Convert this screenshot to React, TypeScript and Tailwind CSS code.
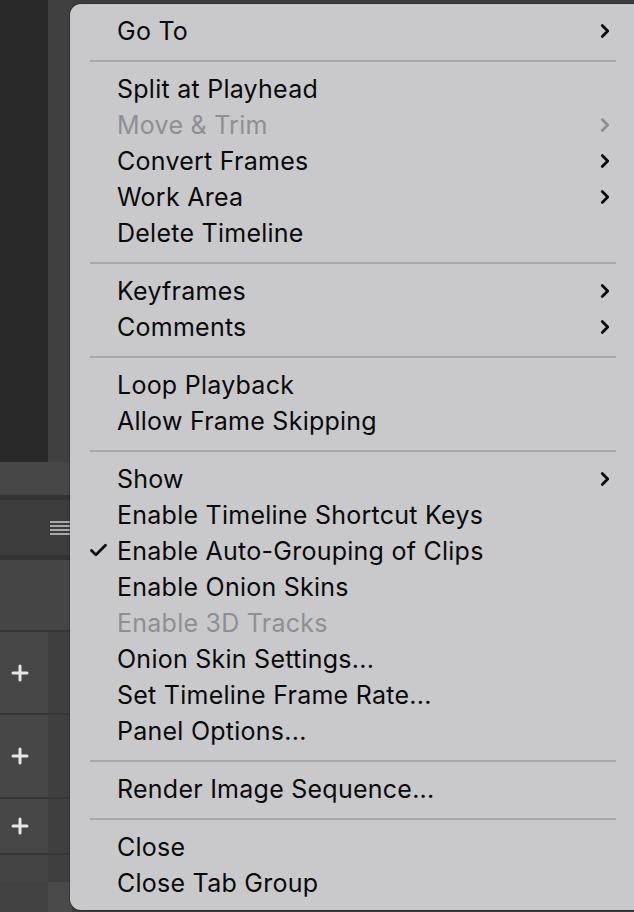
import { Check, ChevronRight, Plus } from "lucide-react";

type Item =
  | { kind: "item"; label: string; sub?: boolean; disabled?: boolean; checked?: boolean }
  | { kind: "sep" };

const ITEMS: Item[] = [
  { kind: "item", label: "Go To", sub: true },
  { kind: "sep" },
  { kind: "item", label: "Split at Playhead" },
  { kind: "item", label: "Move & Trim", sub: true, disabled: true },
  { kind: "item", label: "Convert Frames", sub: true },
  { kind: "item", label: "Work Area", sub: true },
  { kind: "item", label: "Delete Timeline" },
  { kind: "sep" },
  { kind: "item", label: "Keyframes", sub: true },
  { kind: "item", label: "Comments", sub: true },
  { kind: "sep" },
  { kind: "item", label: "Loop Playback" },
  { kind: "item", label: "Allow Frame Skipping" },
  { kind: "sep" },
  { kind: "item", label: "Show", sub: true },
  { kind: "item", label: "Enable Timeline Shortcut Keys" },
  { kind: "item", label: "Enable Auto-Grouping of Clips", checked: true },
  { kind: "item", label: "Enable Onion Skins" },
  { kind: "item", label: "Enable 3D Tracks", disabled: true },
  { kind: "item", label: "Onion Skin Settings..." },
  { kind: "item", label: "Set Timeline Frame Rate..." },
  { kind: "item", label: "Panel Options..." },
  { kind: "sep" },
  { kind: "item", label: "Render Image Sequence..." },
  { kind: "sep" },
  { kind: "item", label: "Close" },
  { kind: "item", label: "Close Tab Group" },
];

function AddRow({ h }: { h: string }) {
  return (
    <div className={`flex ${h}`}>
      <div className="w-[48px] bg-[#474747] flex items-center justify-center pr-[8px]">
        <Plus className="w-[24px] h-[24px] text-[#e6e6e6]" strokeWidth={3} />
      </div>
      <div className="flex-1 bg-[#3f3f3f]" />
    </div>
  );
}

export default function App() {
  return (
    <div
      className="relative w-[634px] h-[912px] overflow-hidden bg-[#3c3c3c]"
      style={{ fontFamily: "Inter, 'Noto Sans', sans-serif" }}
    >
      {/* panel behind the menu */}
      <div className="flex flex-col w-[72px] h-full">
        <div className="flex h-[462px]">
          <div className="w-[48px] bg-[#282828]" />
          <div className="flex-1 bg-[#404040]" />
        </div>
        <div className="h-[33px] bg-[#474747]" />
        <div className="h-[5px] bg-[#333333]" />
        <div className="h-[55px] bg-[#3c3c3c] flex items-center justify-end pr-[2px]">
          <div className="flex flex-col gap-[2px] w-[20px]">
            <div className="h-[2px] bg-[#a8a8a8]" />
            <div className="h-[2px] bg-[#a8a8a8]" />
            <div className="h-[2px] bg-[#a8a8a8]" />
            <div className="h-[2px] bg-[#a8a8a8]" />
          </div>
        </div>
        <div className="h-[5px] bg-[#333333]" />
        <div className="h-[70px] bg-[#454545]" />
        <div className="h-[2px] bg-[#363636]" />
        <AddRow h="h-[81px]" />
        <div className="h-[2px] bg-[#363636]" />
        <AddRow h="h-[82px]" />
        <div className="h-[2px] bg-[#363636]" />
        <AddRow h="h-[54px]" />
        <div className="h-[2px] bg-[#363636]" />
        <div className="flex h-[27px]">
          <div className="w-[48px] bg-[#444444]" />
          <div className="flex-1 bg-[#3f3f3f]" />
        </div>
        <div className="flex flex-1">
          <div className="w-[48px] bg-[#424242]" />
          <div className="flex-1 bg-[#4a4a4a]" />
        </div>
      </div>

      {/* context menu */}
      <div className="absolute left-[70px] top-[4px] w-[580px] h-[906px] rounded-[11px] bg-[#c9c9cc] py-[9px] shadow-[0_0_0_1px_rgba(0,0,0,0.25)]">
        {ITEMS.map((it, i) =>
          it.kind === "sep" ? (
            <div key={i} className="h-[22px] flex items-center pl-[20px] pr-[34px]">
              <div className="h-[2px] w-full bg-[#aaaaad] mt-[2px]" />
            </div>
          ) : (
            <div
              key={i}
              className={`relative h-[36px] flex items-center pl-[47px] text-[25px] tracking-[0.25px] ${
                it.disabled ? "text-[#8f8f92]" : "text-[#0a0a0a]"
              }`}
            >
              {it.checked && (
                <Check className="absolute left-[18px] top-[7px] w-[21px] h-[21px]" strokeWidth={3.2} />
              )}
              <span className="leading-none">{it.label}</span>
              {it.sub && (
                <ChevronRight
                  className={`absolute left-[524px] top-[7px] w-[22px] h-[22px] ${
                    it.disabled ? "text-[#8f8f92]" : "text-[#0a0a0a]"
                  }`}
                  strokeWidth={3}
                />
              )}
            </div>
          )
        )}
      </div>
    </div>
  );
}
